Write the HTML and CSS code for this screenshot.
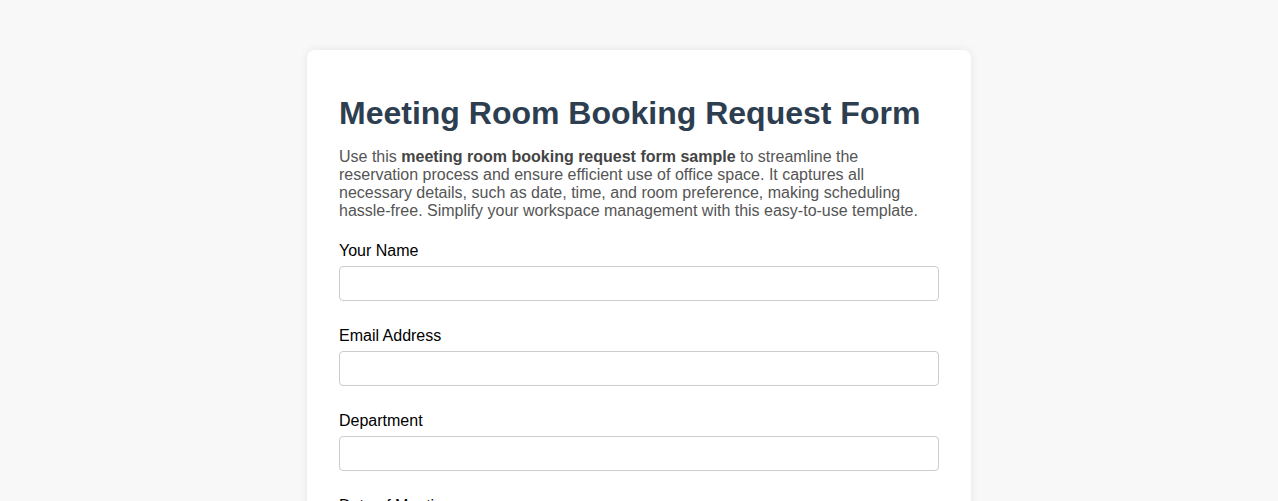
FILE: index.html
```html
<!DOCTYPE html>
<html lang="en">
<head>
<meta charset="utf-8">
<title>Meeting Room Booking Request Form</title>
<link rel="stylesheet" href="styles.css">
</head>
<body>
<div class="card">
  <h1 class="title">Meeting Room Booking Request Form</h1>
  <p class="intro">Use this <strong>meeting room booking request form sample</strong> to streamline the reservation process and ensure efficient use of office space. It captures all necessary details, such as date, time, and room preference, making scheduling hassle-free. Simplify your workspace management with this easy-to-use template.</p>
  <form class="form">
    <div class="field">
      <label class="label" for="name">Your Name</label>
      <input class="input" id="name" type="text">
    </div>
    <div class="field">
      <label class="label" for="email">Email Address</label>
      <input class="input" id="email" type="email">
    </div>
    <div class="field">
      <label class="label" for="dept">Department</label>
      <input class="input" id="dept" type="text">
    </div>
    <div class="field">
      <label class="label" for="date">Date of Meeting</label>
      <input class="input" id="date" type="text">
    </div>
  </form>
</div>
</body>
</html>
```
FILE: styles.css
```css
html, body {
  margin: 0;
  padding: 0;
}
body {
  background: #f8f8f8;
  font-family: "Liberation Sans", Arial, sans-serif;
  color: #000;
  padding: 50px 20px;
}
.card {
  max-width: 600px;
  margin: 0 auto;
  background: #fff;
  border-radius: 8px;
  box-shadow: 0 0 10px rgba(0, 0, 0, 0.08);
  padding: 45px 32px 32px;
}
.title {
  margin: 0 0 16px;
  font-size: 32px;
  line-height: 37px;
  font-weight: bold;
  color: #2c3e50;
}
.intro {
  margin: 0 0 21px;
  font-size: 16px;
  line-height: 18px;
  color: #555;
}
.intro strong {
  color: #444;
}
.form {
  display: flex;
  flex-direction: column;
  gap: 25px;
}
.field {
  display: flex;
  flex-direction: column;
  gap: 6px;
}
.label {
  font-size: 16px;
  line-height: 19px;
}
.input {
  box-sizing: border-box;
  width: 100%;
  height: 35px;
  margin: 0;
  padding: 8px;
  border: 1px solid #ccc;
  border-radius: 4px;
  font-size: 16px;
  font-family: inherit;
  background: #fff;
}
```
